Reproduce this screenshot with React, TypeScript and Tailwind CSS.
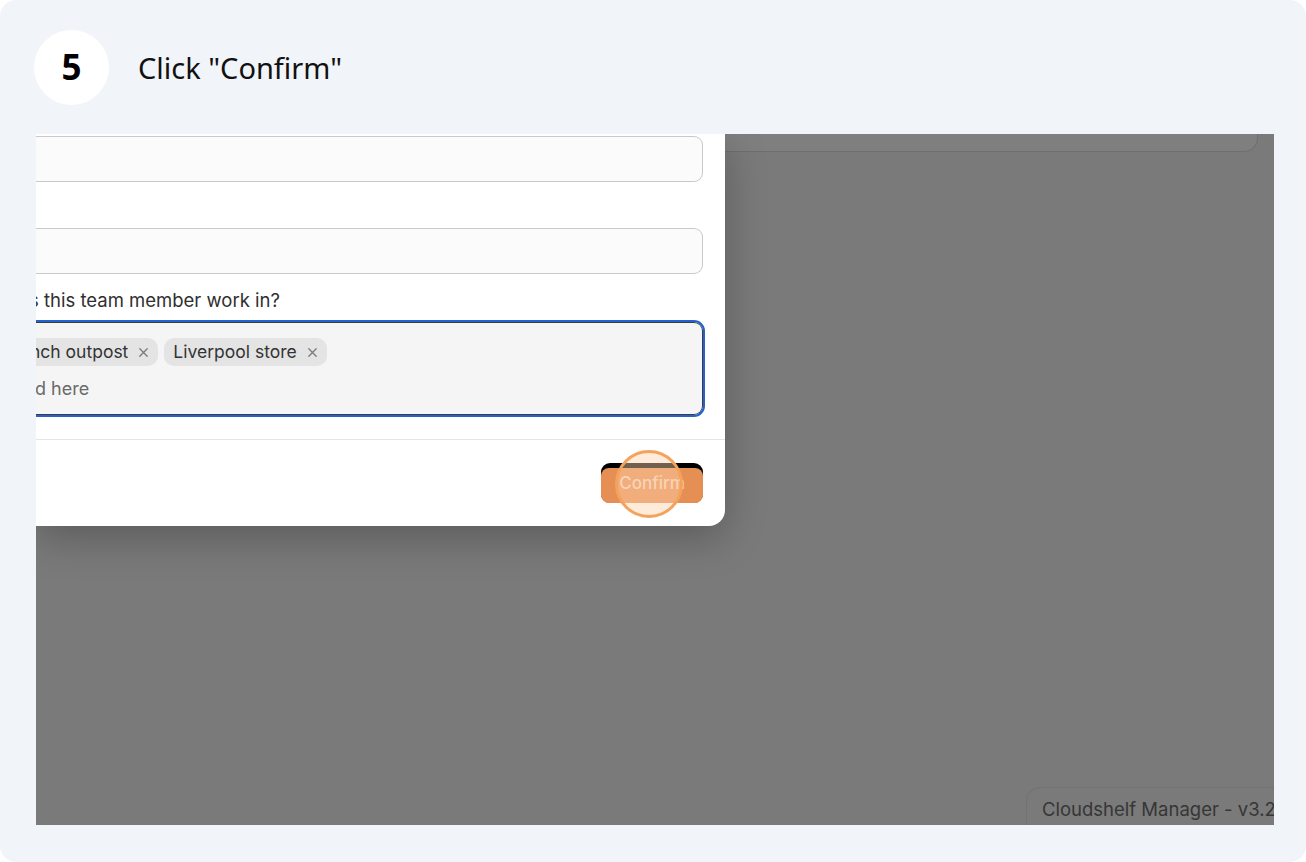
import React from 'react';

const X = () => (
  <svg width="13" height="13" viewBox="0 0 14 14" className="ml-[9px] shrink-0">
    <path d="M3 3l8 8M11 3l-8 8" stroke="#7a7a7a" strokeWidth="1.4" strokeLinecap="round" />
  </svg>
);

const Tag: React.FC<{ label: string; clipped?: boolean }> = ({ label, clipped }) => (
  <div
    className={`flex items-center h-[28px] bg-[#e4e4e4] rounded-[10px] text-[17.5px] text-[#333] pr-[8px] ${
      clipped ? 'pl-[10px] ml-[-16px]' : 'pl-[9px]'
    }`}
  >
    <span>{label}</span>
    <X />
  </div>
);

export default function App() {
  return (
    <div className="w-[1306px] h-[862px] bg-white">
      <div className="w-full h-full bg-[#f1f4f9] rounded-2xl flex flex-col">
        {/* step header */}
        <div className="h-[134px] flex items-center pl-[34px] shrink-0">
          <div className="w-[75px] h-[75px] rounded-full bg-white flex items-center justify-center">
            <span className="font-['Noto_Sans',sans-serif] font-bold text-[35px] text-black leading-none mt-[-2px]">5</span>
          </div>
          <div className="ml-[29px] font-['Noto_Sans',sans-serif] text-[29px] text-[#111] mt-[2px]">
            Click "Confirm"
          </div>
        </div>

        {/* screenshot */}
        <div className="relative ml-[36px] w-[1238px] h-[691px] overflow-hidden bg-[#7a7a7a] font-['Inter',sans-serif]">
          {/* underlying page, dimmed */}
          <div className="flex flex-col h-full">
            <div className="flex justify-end pr-[16px]">
              <div className="w-[540px] h-[18px] bg-[#7f7f7f] border-b border-r border-[#6f6f6f] rounded-br-[14px]" />
            </div>
            <div className="flex-1" />
            <div className="flex justify-end">
              <div className="w-[248px] h-[38px] border-t border-l border-[#727272] rounded-tl-[14px] pl-[15px] pt-[8px] text-[18.5px] text-[#363636] whitespace-nowrap">
                Cloudshelf Manager - v3.2
              </div>
            </div>
          </div>

          {/* modal */}
          <div className="absolute top-0 left-0 w-[689px] h-[392px] bg-white rounded-br-[16px] shadow-[0_12px_40px_rgba(0,0,0,0.25)] pr-[22px] flex flex-col overflow-hidden">
            <div className="mt-[2px] h-[46px] bg-[#fbfbfb] border border-[#c9c9c9] border-l-0 rounded-r-[9px]" />
            <div className="mt-[46px] h-[46px] bg-[#fbfbfb] border border-[#c9c9c9] border-l-0 rounded-r-[9px]" />
            <div className="mt-[14px] h-[24px] leading-[24px] text-[18.5px] text-[#2f2f2f] whitespace-nowrap ml-[-7px]">
              s this team member work in?
            </div>
            <div className="mt-[10px] h-[93px] bg-[#f5f5f5] border-[1.5px] border-l-0 border-[#3c3c3c] rounded-r-[9px] outline-2 outline-[#2461d1] pt-[15px] flex flex-col">
              <div className="flex gap-[6px]">
                <Tag label="nch outpost" clipped />
                <Tag label="Liverpool store" />
              </div>
              <div className="mt-[11px] text-[18px] leading-[24px] text-[#6a6a6a] ml-[-1px]">d here</div>
            </div>
            <div className="mt-[24px] h-px bg-[#e5e5e5] mr-[-22px]" />
            <div className="mt-[23px] flex justify-end">
              <div className="relative w-[102px] h-[40px]">
                <div className="absolute inset-0 bg-black rounded-[9px]" />
                <div className="absolute left-0 right-0 top-[5px] bottom-0 bg-[#e58f55] rounded-[8px] flex items-center justify-center">
                  <span className="text-[17px] font-medium text-[#f5d4bc] mt-[-3px]">Confirm</span>
                </div>
                <div className="absolute left-[14px] top-[-13px] w-[68px] h-[68px] rounded-full border-[3px] border-[#f4a35c] bg-[#ffd2ad]/45" />
              </div>
            </div>
          </div>
        </div>
      </div>
    </div>
  );
}
